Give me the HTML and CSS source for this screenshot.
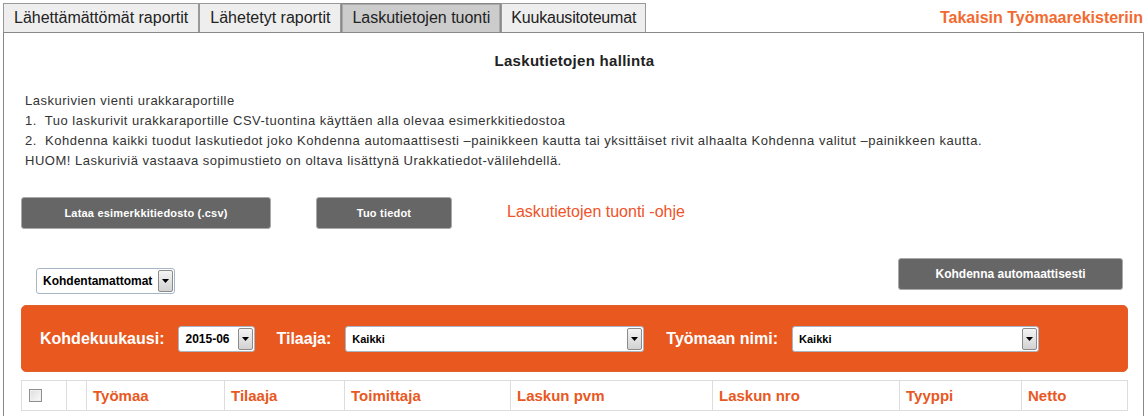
FILE: index.html
```html
<!DOCTYPE html>
<html lang="fi">
<head>
<meta charset="utf-8">
<title>Laskutietojen tuonti</title>
<link rel="stylesheet" href="styles.css">
</head>
<body>
<div class="page">
  <div class="topbar">
    <div class="tabs">
      <div class="tab">Lähettämättömät raportit</div>
      <div class="tab">Lähetetyt raportit</div>
      <div class="tab tab-active">Laskutietojen tuonti</div>
      <div class="tab tab-narrow">Kuukausitoteumat</div>
    </div>
    <a class="back-link">Takaisin Työmaarekisteriin</a>
  </div>
  <div class="content">
    <h1 class="title">Laskutietojen hallinta</h1>
    <div class="intro">
      <div>Laskurivien vienti urakkaraportille</div>
      <div>1.&nbsp; Tuo laskurivit urakkaraportille CSV-tuontina käyttäen alla olevaa esimerkkitiedostoa</div>
      <div>2.&nbsp; Kohdenna kaikki tuodut laskutiedot joko Kohdenna automaattisesti –painikkeen kautta tai yksittäiset rivit alhaalta Kohdenna valitut –painikkeen kautta.</div>
      <div>HUOM! Laskuriviä vastaava sopimustieto on oltava lisättynä Urakkatiedot-välilehdellä.</div>
    </div>
    <div class="actions">
      <div class="btn btn-download">Lataa esimerkkitiedosto (.csv)</div>
      <div class="btn btn-import">Tuo tiedot</div>
      <a class="help-link">Laskutietojen tuonti -ohje</a>
    </div>
    <div class="assign-row">
      <div class="select sel-filter">
        <span class="sel-text">Kohdentamattomat</span>
        <span class="sel-arrow"><svg width="7" height="4" viewBox="0 0 7 4"><path d="M0 0H7L3.5 4Z" fill="#000"/></svg></span>
      </div>
      <div class="btn btn-auto">Kohdenna automaattisesti</div>
    </div>
    <div class="filterbar">
      <span class="f-label">Kohdekuukausi:</span>
      <div class="select sel-month">
        <span class="sel-text">2015-06</span>
        <span class="sel-arrow"><svg width="7" height="4" viewBox="0 0 7 4"><path d="M0 0H7L3.5 4Z" fill="#000"/></svg></span>
      </div>
      <span class="f-label">Tilaaja:</span>
      <div class="select sel-client">
        <span class="sel-text sel-small">Kaikki</span>
        <span class="sel-arrow"><svg width="7" height="4" viewBox="0 0 7 4"><path d="M0 0H7L3.5 4Z" fill="#000"/></svg></span>
      </div>
      <span class="f-label">Työmaan nimi:</span>
      <div class="select sel-site">
        <span class="sel-text sel-small">Kaikki</span>
        <span class="sel-arrow"><svg width="7" height="4" viewBox="0 0 7 4"><path d="M0 0H7L3.5 4Z" fill="#000"/></svg></span>
      </div>
    </div>
    <table class="grid">
      <thead>
        <tr>
          <th class="c-check"><span class="checkbox"></span></th>
          <th class="c-empty"></th>
          <th class="c-site">Työmaa</th>
          <th class="c-client">Tilaaja</th>
          <th class="c-supplier">Toimittaja</th>
          <th class="c-date">Laskun pvm</th>
          <th class="c-num">Laskun nro</th>
          <th class="c-type">Tyyppi</th>
          <th class="c-net">Netto</th>
        </tr>
      </thead>
    </table>
  </div>
</div>
</body>
</html>
```
FILE: styles.css
```css
html, body {
  margin: 0;
  padding: 0;
  background: #fff;
  overflow: hidden;
}
body {
  font-family: "Liberation Sans", Arial, sans-serif;
  color: #222;
}
.page {
  padding: 3px 4px 0 3px;
}
.topbar {
  display: flex;
  justify-content: space-between;
  align-items: flex-end;
  height: 29px;
}
.tabs {
  display: flex;
  gap: 0;
}
.tab {
  height: 28px;
  line-height: 28px;
  padding: 0 10px 0 10px;
  border: 1px solid #999;
  border-bottom: none;
  background: #eeeeee;
  font-size: 16px;
  color: #222;
  white-space: nowrap;
}
.tab-narrow {
  letter-spacing: -0.2px;
  padding: 0 9px;
}
.tab-active {
  background: #cccccc;
  border-color: #888;
  box-shadow: inset 1px 1px 0 #aaa, inset -1px 0 0 #aaa;
}
.back-link {
  align-self: center;
  font-size: 16px;
  font-weight: bold;
  color: #f26a30;
  margin-right: 1px;
  padding-top: 1px;
}
.content {
  border: 1px solid #888;
  height: 420px;
  padding: 0 15px 0 17px;
}
.title {
  margin: 19px 0 0 0;
  font-size: 15px;
  line-height: 18px;
  letter-spacing: 0.3px;
  font-weight: bold;
  text-align: center;
  color: #222;
}
.intro {
  margin: 21px 0 0 4px;
  font-size: 13px;
  line-height: 20px;
  letter-spacing: 0.5px;
  color: #333;
}
.actions {
  display: flex;
  align-items: center;
  margin-top: 26px;
}
.btn {
  background: #666666;
  border: 1px solid #a9a9a9;
  border-radius: 3px;
  color: #fff;
  font-weight: bold;
  font-size: 11px;
  letter-spacing: 0.2px;
  height: 30px;
  display: flex;
  align-items: center;
  justify-content: center;
  box-sizing: content-box;
}
.btn-download {
  width: 248px;
  margin-right: 45px;
}
.btn-import {
  width: 134px;
  margin-right: 55px;
}
.help-link {
  font-size: 16px;
  color: #ef532a;
  padding-bottom: 2px;
}
.assign-row {
  display: flex;
  justify-content: space-between;
  align-items: flex-start;
  margin-top: 29px;
  height: 32px;
}
.btn-auto {
  width: 223px;
  font-size: 12px;
  letter-spacing: 0;
  margin-right: 5px;
}
.select {
  display: flex;
  align-items: center;
  justify-content: space-between;
  background: #fff;
  border: 1px solid #a7b5c6;
  border-radius: 3px;
  box-sizing: border-box;
  height: 26px;
  padding: 1px 1px 1px 0;
  flex: none;
}
.sel-text {
  font-weight: bold;
  font-size: 12px;
  color: #000;
  padding-left: 6px;
}
.sel-small {
  font-size: 11px;
}
.sel-arrow {
  width: 15px;
  height: 22px;
  box-sizing: border-box;
  border: 1px solid #8c8c8c;
  border-radius: 2px;
  background: linear-gradient(#f4f4f4, #d2d2d2);
  display: flex;
  align-items: center;
  justify-content: center;
}
.sel-filter {
  width: 139px;
  margin: 10px 0 0 15px;
}
.filterbar {
  display: flex;
  align-items: center;
  margin-top: 15px;
  height: 67px;
  box-sizing: border-box;
  background: #e8581f;
  border: 1px solid #e0602c;
  border-radius: 5px;
  padding: 0 0 0 18px;
}
.f-label {
  color: #fff;
  font-size: 16px;
  font-weight: bold;
  margin-right: 14px;
}
.sel-month {
  width: 77px;
  margin-right: 21px;
}
.sel-client {
  width: 299px;
  margin-right: 22px;
}
.sel-site {
  width: 247px;
}
.grid {
  margin-top: 8px;
  width: 1106px;
  border-collapse: collapse;
  table-layout: fixed;
}
.grid th {
  box-sizing: border-box;
  border: 1px solid #dddddd;
  height: 30px;
  padding: 0 0 0 6px;
  text-align: left;
  font-size: 15px;
  font-weight: bold;
  color: #e8581f;
}
.c-check { width: 45px; }
.c-empty { width: 20px; }
.c-site { width: 138px; }
.c-client { width: 120px; }
.c-supplier { width: 166px; }
.c-date { width: 202px; }
.c-num { width: 187px; }
.c-type { width: 122px; }
.c-net { width: 106px; }
.grid th.c-check {
  padding-left: 7px;
}
.checkbox {
  display: block;
  width: 13px;
  height: 13px;
  box-sizing: border-box;
  border: 1px solid #8f8f8f;
  background: linear-gradient(135deg, #dcdcdc, #fbfbfb);
  box-shadow: inset 0 0 0 1px #f0f0f0;
}
```
